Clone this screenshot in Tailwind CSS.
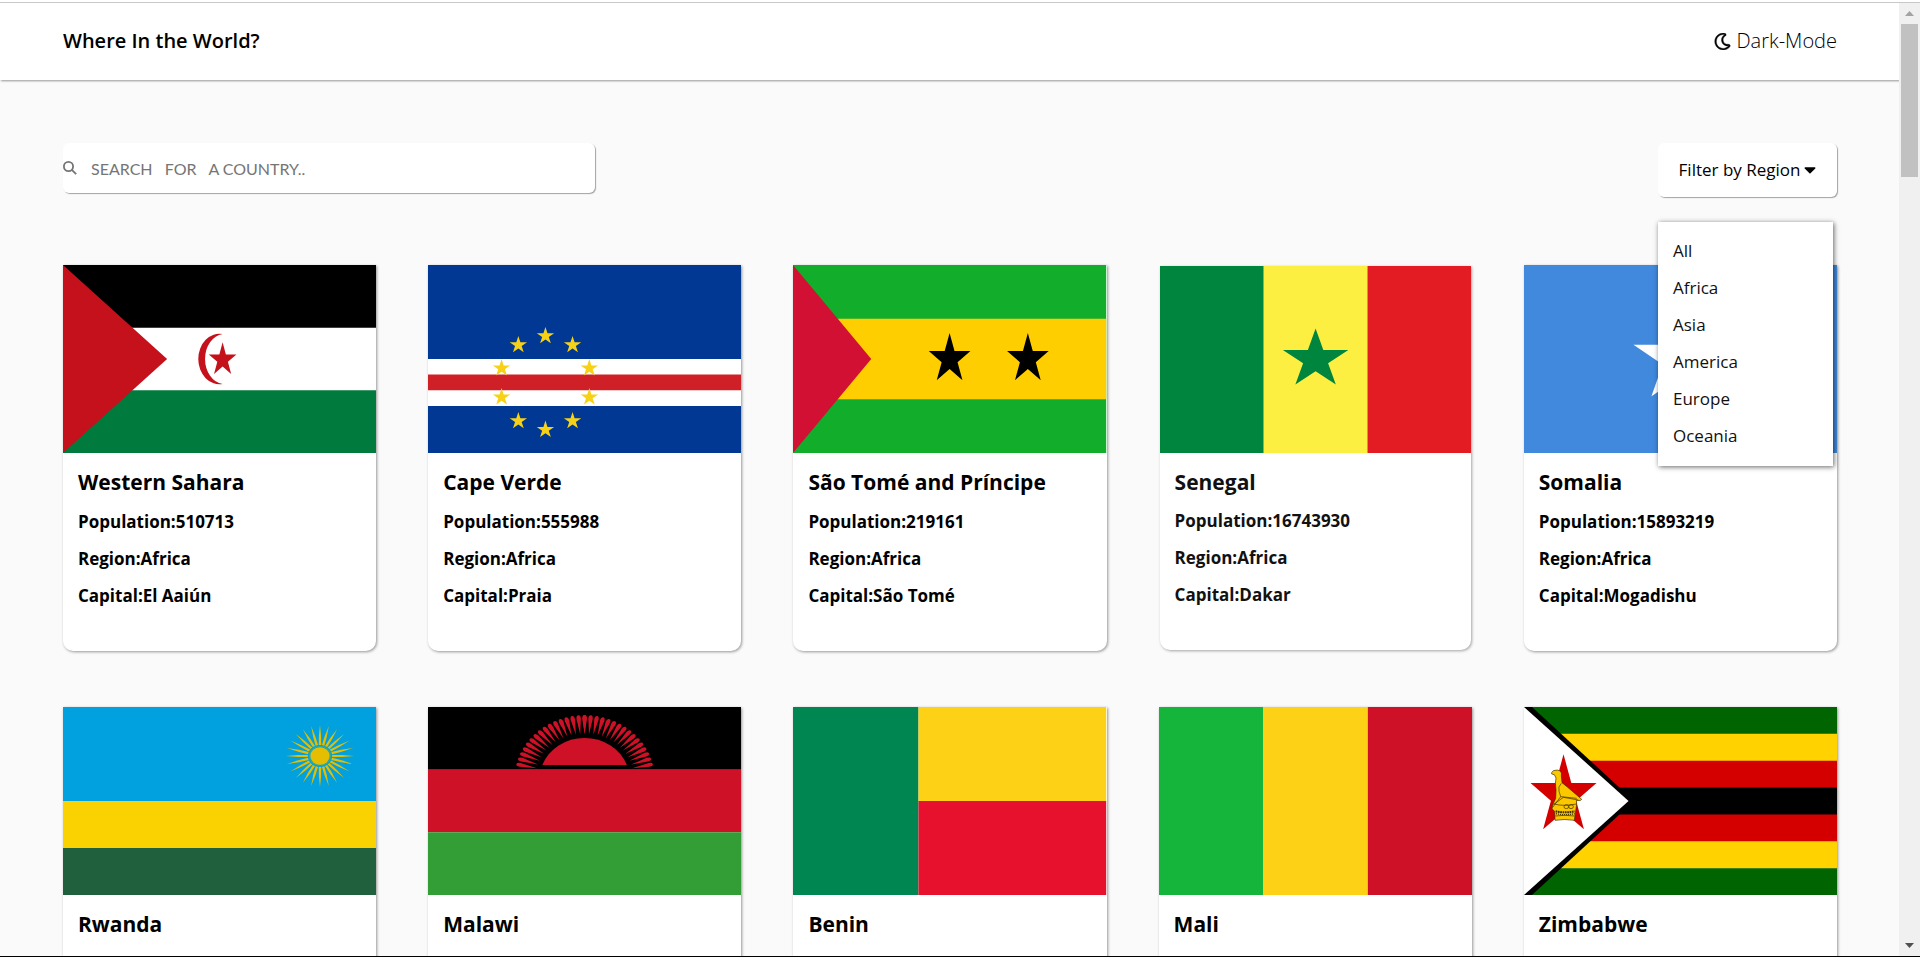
<!DOCTYPE html>
<html lang="en">
<head>
<meta charset="utf-8">
<meta name="viewport" content="width=device-width, initial-scale=1">
<title>Where In the World?</title>
<script src="https://cdn.jsdelivr.net/npm/@tailwindcss/browser@4"></script>
</head>
<body class="flex h-screen flex-col overflow-hidden border-b border-black bg-white pt-[2px] font-['Open_Sans','Noto_Sans',sans-serif] text-black">

<!-- Shared shapes -->
<svg class="absolute size-0" aria-hidden="true">
  <defs>
    <polygon id="star" points="0,-1 .2245,-.309 .951,-.309 .3633,.118 .5878,.809 0,.382 -.5878,.809 -.3633,.118 -.951,-.309 -.2245,-.309"/>
    <path id="rw1" d="M-1.1-11L-1-20L0-31L1-20L1.1-11Z"/>
    <g id="rw2"><use href="#rw1"/><use href="#rw1" transform="rotate(15)"/></g>
    <g id="rw4"><use href="#rw2"/><use href="#rw2" transform="rotate(30)"/></g>
    <g id="rw8"><use href="#rw4"/><use href="#rw4" transform="rotate(60)"/></g>
    <path id="mw1" d="M0-44L-2-59.500Q-2-63 0-63Q2-63 2-59.500Z"/>
    <g id="mw2"><use href="#mw1"/><use href="#mw1" transform="rotate(5.150)"/></g>
    <g id="mw4"><use href="#mw2"/><use href="#mw2" transform="rotate(10.300)"/></g>
    <g id="mw8"><use href="#mw4"/><use href="#mw4" transform="rotate(20.600)"/></g>
    <g id="mw16"><use href="#mw8"/><use href="#mw8" transform="rotate(41.200)"/></g>
  </defs>
</svg>

<div class="flex min-h-0 flex-1 border-t border-[#c8c8c8]">
  <div class="min-w-0 flex-1 overflow-hidden bg-[#fafafa]">
    <header class="flex h-[77px] items-center justify-between bg-white pr-[62px] pb-px pl-[63px] shadow-[1px_1px_2px_rgba(0,0,0,0.4)]">
      <h1 class="text-[20px] leading-6 font-semibold">Where In the World?</h1>
      <button type="button" class="flex items-center gap-[6px] text-[20px] leading-6 font-light">
        <svg class="size-[17px]" viewBox="0 0 512 512" fill="currentColor" stroke="currentColor" stroke-width="12" aria-hidden="true"><path d="M279.135 512c78.756 0 150.982-35.804 198.844-94.775 28.27-34.831-2.558-85.722-46.249-77.401-82.348 15.683-158.272-47.268-158.272-130.792 0-48.424 26.06-92.292 67.434-115.836 38.745-22.05 28.999-80.788-15.022-88.919A257.936 257.936 0 0 0 279.135 0c-141.36 0-256 114.575-256 256 0 141.36 114.576 256 256 256zm0-464c12.985 0 25.689 1.201 38.016 3.478-54.76 31.163-91.693 90.042-91.693 157.554 0 113.848 103.641 199.2 215.252 177.944C402.574 433.964 344.366 464 279.135 464c-114.875 0-208-93.125-208-208s93.125-208 208-208z"/></svg>
        Dark-Mode
      </button>
    </header>

    <main class="pt-[63px] pr-[62px] pl-[63px]">
      <div class="flex items-start justify-between">
        <label class="flex h-[50px] w-[30%] items-center gap-[14px] rounded-[6px] bg-white text-[#757575] shadow-[1px_1px_1px_rgba(0,0,0,0.35)]">
          <svg class="size-[14px] shrink-0" viewBox="0 0 14 14" fill="none" stroke="currentColor" stroke-width="1.800" aria-hidden="true"><circle cx="5.500" cy="5.500" r="4.600"/><path d="M8.800 8.800L13.200 13.200"/></svg>
          <input type="text" aria-label="Search for a country" class="h-full min-w-0 flex-1 bg-transparent font-[Lato,sans-serif] text-[16px] outline-none placeholder:text-[#757575]" placeholder="SEARCH   FOR   A COUNTRY..">
        </label>

        <div class="relative">
          <button type="button" aria-haspopup="true" aria-expanded="true" class="flex h-[54px] w-[179px] items-center justify-center gap-1 rounded-[6px] bg-white pb-px text-[17px] shadow-[1px_1px_1px_rgba(0,0,0,0.35)]">
            Filter by Region
            <svg class="h-[19px] w-[12px]" viewBox="0 0 320 512" fill="currentColor" aria-hidden="true"><path d="M31.3 192h257.3c17.8 0 26.7 21.5 14.1 34.1L174.1 354.8c-7.8 7.8-20.5 7.8-28.3 0L17.2 226.1C4.6 213.5 13.5 192 31.3 192z"/></svg>
          </button>
          <ul class="absolute top-[79px] left-0 z-10 flex h-[244px] w-[175px] flex-col bg-white py-[10px] text-[17px] leading-[37px] text-[#111] shadow-[1px_1px_5px_rgba(0,0,0,0.6)]">
            <li><button type="button" class="w-full px-[15px] text-left">All</button></li>
            <li><button type="button" class="w-full px-[15px] text-left">Africa</button></li>
            <li><button type="button" class="w-full px-[15px] text-left">Asia</button></li>
            <li><button type="button" class="w-full px-[15px] text-left">America</button></li>
            <li><button type="button" class="w-full px-[15px] text-left">Europe</button></li>
            <li><button type="button" class="w-full px-[15px] text-left">Oceania</button></li>
          </ul>
        </div>
      </div>

      <section class="mt-[68px] grid grid-cols-5 gap-x-[52px] gap-y-[56px]" aria-label="Countries">
        <article class="rounded-b-[10px] bg-white shadow-[1px_1px_3px_rgba(0,0,0,0.4)]">
          <svg class="block h-[188px] w-full" viewBox="0 0 312 188" preserveAspectRatio="none" role="img" aria-label="Flag of Western Sahara">
            <path fill="#fff" d="M0 0H312V188H0z"/><path d="M0 0H312V62.700H0z"/><path fill="#007a3d" d="M0 125.300H312V188H0z"/><path fill="#c4111b" d="M0 0L103.700 94L0 188z"/>
            <path fill="#c4111b" d="M159 69A21 25.300 0 1 0 159 119A20 25.200 0 0 1 159 69z"/>
            <use href="#star" fill="#c4111b" transform="translate(159 94.800) scale(14.500 17.500)"/>
          </svg>
          <div class="px-[15px] pt-[13px] pb-[37px] text-[17px] leading-[37px] font-bold">
            <h2 class="mb-[5px] text-[21px] leading-8">Western Sahara</h2>
            <p>Population:510713</p><p>Region:Africa</p><p>Capital:El Aaiún</p>
          </div>
        </article>

        <article class="rounded-b-[10px] bg-white shadow-[1px_1px_3px_rgba(0,0,0,0.4)]">
          <svg class="block h-[188px] w-full" viewBox="0 0 312 188" preserveAspectRatio="none" role="img" aria-label="Flag of Cape Verde">
            <path fill="#003893" d="M0 0H312V188H0z"/><path fill="#fff" d="M0 94H312V141H0z"/><path fill="#cf2027" d="M0 109.500H312V125.300H0z"/>
            <g fill="#f7d116">
              <use href="#star" transform="translate(117 71) scale(9.100)"/><use href="#star" transform="translate(144 80) scale(9.100)"/><use href="#star" transform="translate(160.700 103.200) scale(9.100)"/><use href="#star" transform="translate(160.700 132.200) scale(9.100)"/><use href="#star" transform="translate(144 156) scale(9.100)"/><use href="#star" transform="translate(117 164.700) scale(9.100)"/><use href="#star" transform="translate(90 156) scale(9.100)"/><use href="#star" transform="translate(73.300 132.200) scale(9.100)"/><use href="#star" transform="translate(73.300 103.200) scale(9.100)"/><use href="#star" transform="translate(90 80) scale(9.100)"/>
            </g>
          </svg>
          <div class="px-[15px] pt-[13px] pb-[37px] text-[17px] leading-[37px] font-bold">
            <h2 class="mb-[5px] text-[21px] leading-8">Cape Verde</h2>
            <p>Population:555988</p><p>Region:Africa</p><p>Capital:Praia</p>
          </div>
        </article>

        <article class="rounded-b-[10px] bg-white shadow-[1px_1px_3px_rgba(0,0,0,0.4)]">
          <svg class="block h-[188px] w-full" viewBox="0 0 313 188" preserveAspectRatio="none" role="img" aria-label="Flag of São Tomé and Príncipe">
            <path fill="#12ad2b" d="M0 0H313V188H0z"/><path fill="#ffce00" d="M0 53.700H313V134.300H0z"/><path fill="#d21034" d="M0 0L78.200 94L0 188z"/>
            <use href="#star" transform="translate(156.500 94.100) scale(21.900 26.100)"/><use href="#star" transform="translate(234.700 94.100) scale(21.900 26.100)"/>
          </svg>
          <div class="px-[15px] pt-[13px] pb-[37px] text-[17px] leading-[37px] font-bold">
            <h2 class="mb-[5px] text-[21px] leading-8">São Tomé and Príncipe</h2>
            <p>Population:219161</p><p>Region:Africa</p><p>Capital:São Tomé</p>
          </div>
        </article>

        <!-- Hovered card: slightly inset and dimmed -->
        <article class="m-px rounded-b-[10px] bg-white shadow-[1px_1px_3px_rgba(0,0,0,0.35)]">
          <svg class="block h-[187px] w-full" viewBox="0 0 312 188" preserveAspectRatio="none" role="img" aria-label="Flag of Senegal">
            <path fill="#00853f" d="M0 0H104V188H0z"/><path fill="#fdef42" d="M104 0H208V188H104z"/><path fill="#e31b23" d="M208 0H312V188H208z"/>
            <use href="#star" fill="#00853f" transform="translate(156 94) scale(34.500 31.200)"/>
          </svg>
          <div class="px-[15px] pt-[13px] text-[17px] leading-[37px] font-bold text-[#111]">
            <h2 class="mb-[4px] text-[21px] leading-8">Senegal</h2>
            <p>Population:16743930</p><p>Region:Africa</p><p>Capital:Dakar</p>
          </div>
        </article>

        <article class="rounded-b-[10px] bg-white shadow-[1px_1px_3px_rgba(0,0,0,0.4)]">
          <svg class="block h-[188px] w-full" viewBox="0 0 312 188" preserveAspectRatio="none" role="img" aria-label="Flag of Somalia">
            <path fill="#4189dd" d="M0 0H312V188H0z"/><use href="#star" fill="#fff" transform="translate(156 94) scale(49.400 46)"/>
          </svg>
          <div class="px-[15px] pt-[13px] pb-[37px] text-[17px] leading-[37px] font-bold">
            <h2 class="mb-[5px] text-[21px] leading-8">Somalia</h2>
            <p>Population:15893219</p><p>Region:Africa</p><p>Capital:Mogadishu</p>
          </div>
        </article>

        <article class="rounded-b-[10px] bg-white pb-[37px] shadow-[1px_1px_3px_rgba(0,0,0,0.4)]">
          <svg class="block h-[188px] w-full" viewBox="0 0 312 188" preserveAspectRatio="none" role="img" aria-label="Flag of Rwanda">
            <path fill="#00a1de" d="M0 0H312V188H0z"/><path fill="#fad201" d="M0 94H312V141H0z"/><path fill="#20603d" d="M0 141H312V188H0z"/>
            <g fill="#e5be01" transform="translate(256 49) scale(1.100 1)"><use href="#rw8"/><use href="#rw8" transform="rotate(120)"/><use href="#rw8" transform="rotate(240)"/><circle r="10.200" fill="#2ba8a0"/><circle r="8.700"/></g>
          </svg>
          <div class="px-[15px] pt-[13px] font-bold"><h2 class="text-[21px] leading-8">Rwanda</h2></div>
        </article>

        <article class="rounded-b-[10px] bg-white pb-[37px] shadow-[1px_1px_3px_rgba(0,0,0,0.4)]">
          <svg class="block h-[188px] w-full" viewBox="0 0 312 188" preserveAspectRatio="none" role="img" aria-label="Flag of Malawi">
            <path d="M0 0H312V62.700H0z"/><path fill="#ce1126" d="M0 62.700H312V125.300H0z"/><path fill="#339e35" d="M0 125.300H312V188H0z"/>
            <g fill="#ce1126" transform="translate(156 71) scale(1.106 1)"><use href="#mw16"/><use href="#mw16" transform="rotate(-77.250)"/><path d="M-38-13A40.200 40.200 0 0 1 38-13z"/></g>
          </svg>
          <div class="px-[15px] pt-[13px] font-bold"><h2 class="text-[21px] leading-8">Malawi</h2></div>
        </article>

        <article class="rounded-b-[10px] bg-white pb-[37px] shadow-[1px_1px_3px_rgba(0,0,0,0.4)]">
          <svg class="block h-[188px] w-full" viewBox="0 0 312 188" preserveAspectRatio="none" role="img" aria-label="Flag of Benin">
            <path fill="#008751" d="M0 0H125V188H0z"/><path fill="#fcd116" d="M125 0H312V94H125z"/><path fill="#e8112d" d="M125 94H312V188H125z"/>
          </svg>
          <div class="px-[15px] pt-[13px] font-bold"><h2 class="text-[21px] leading-8">Benin</h2></div>
        </article>

        <article class="rounded-b-[10px] bg-white pb-[37px] shadow-[1px_1px_3px_rgba(0,0,0,0.4)]">
          <svg class="block h-[188px] w-full" viewBox="0 0 312 188" preserveAspectRatio="none" role="img" aria-label="Flag of Mali">
            <path fill="#14b53a" d="M0 0H104V188H0z"/><path fill="#fcd116" d="M104 0H208V188H104z"/><path fill="#ce1126" d="M208 0H312V188H208z"/>
          </svg>
          <div class="px-[15px] pt-[13px] font-bold"><h2 class="text-[21px] leading-8">Mali</h2></div>
        </article>

        <article class="rounded-b-[10px] bg-white pb-[37px] shadow-[1px_1px_3px_rgba(0,0,0,0.4)]">
          <svg class="block h-[188px] w-full" viewBox="0 0 313 188" preserveAspectRatio="none" role="img" aria-label="Flag of Zimbabwe">
            <path fill="#006400" d="M0 0H313V188H0z"/><path fill="#ffd200" d="M0 26.860H313V161.140H0z"/><path fill="#d40000" d="M0 53.710H313V134.290H0z"/><path d="M0 80.570H313V107.430H0z"/>
            <path d="M0 0H8L110 94L8 188H0z"/><path fill="#fff" d="M0 0L104.500 94L0 188z"/>
            <use href="#star" fill="#d40000" transform="translate(39.500 88.800) scale(34.700 41.500)"/>
            <g transform="scale(.3333) translate(-42 -51)" fill="#fbc800" stroke="#3a2a00" stroke-width="2">
              <path d="M125 248L130 242Q142 238 151 243Q156 249 154 258L156 278L172 291L215 328L210 332L199 331L200 342L193 391Q164 386 135 391L134 364L126 357L128 345L137 325L138 300L136 280L138 264L133 254L125 252Z"/>
              <path fill="none" d="M154 280Q143 290 147 304L152 320L200 325M152 320L128 352M130 344L160 322L205 330M132 342Q160 350 199 342M162 350a7 6 0 1 0 14 0a7 6 0 1 0-14 0M176 350a7 6 0 1 0 14 0a7 6 0 1 0-14 0M136 378Q164 374 194 378"/>
              <path fill="none" stroke-width="6" stroke-dasharray="5 2" d="M137 364Q164 370 194 364"/>
              <path fill="none" stroke-width="4" stroke-dasharray="3 3" d="M138 371Q164 377 194 371"/>
            </g>
          </svg>
          <div class="px-[15px] pt-[13px] font-bold"><h2 class="text-[21px] leading-8">Zimbabwe</h2></div>
        </article>
      </section>
    </main>
  </div>

  <!-- Scrollbar -->
  <div class="flex w-[21px] shrink-0 flex-col items-center bg-[#f0f0f0] pr-px" aria-hidden="true">
    <div class="flex h-[21px] items-center justify-center"><svg class="h-[5px] w-[9px]" viewBox="0 0 9 5"><path fill="#a3a3a3" d="M0 5L4.500 0L9 5z"/></svg></div>
    <div class="h-[153px] w-[17px] bg-[#c1c1c1]"></div>
    <div class="mt-auto flex h-[21px] items-center justify-center"><svg class="h-[5px] w-[9px]" viewBox="0 0 9 5"><path fill="#505050" d="M0 0L4.500 5L9 0z"/></svg></div>
  </div>
</div>
</body>
</html>
